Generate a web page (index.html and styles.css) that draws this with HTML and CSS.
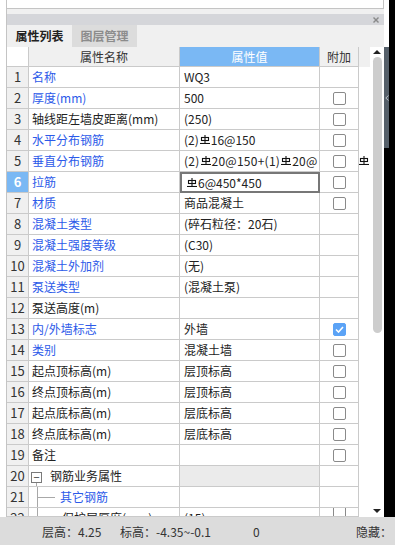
FILE: index.html
```html
<!DOCTYPE html>
<html lang="zh">
<head>
  <meta charset="UTF-8" />
  <title>属性列表</title>
  <link rel="stylesheet" href="styles.css">
</head>
<body>
  <div class="main">
    <div class="gutter"></div>
    <div class="panel">
      <div class="top-box"></div>
      <div class="spacer"></div>
      <div class="titlebar">
        <svg class="close" width="6" height="6" viewBox="0 0 6 6"><line x1="0.5" y1="0.5" x2="5.5" y2="5.5"/><line x1="5.5" y1="0.5" x2="0.5" y2="5.5"/></svg>
      </div>
      <div class="tabs">
        <div class="tab active">属性列表</div>
        <div class="tab off">图层管理</div>
      </div>

      <div class="grid-area">
        <div class="table">
          <div class="row head">
            <div class="num-head"></div>
            <div class="h-name">属性名称</div>
            <div class="h-val">属性值</div>
            <div class="h-add">附加</div>
          </div>

          <div class="row"><div class="num">1</div><div class="name blue">名称</div><div class="val">WQ3</div><div class="add"></div></div>
          <div class="row"><div class="num">2</div><div class="name blue">厚度(mm)</div><div class="val">500</div><div class="add"><span class="cb"></span></div></div>
          <div class="row"><div class="num">3</div><div class="name">轴线距左墙皮距离(mm)</div><div class="val">(250)</div><div class="add"><span class="cb"></span></div></div>
          <div class="row"><div class="num">4</div><div class="name blue">水平分布钢筋</div><div class="val">(2)<svg class="rb" width="10" height="9" viewBox="0 0 10 9"><line x1="5" y1="0" x2="5" y2="8.5"/><rect x="1.5" y="2.5" width="7" height="3"/><line x1="0" y1="8.5" x2="10" y2="8.5"/></svg>16@150</div><div class="add"><span class="cb"></span></div></div>
          <div class="row"><div class="num">5</div><div class="name blue">垂直分布钢筋</div><div class="val wide">(2)<svg class="rb" width="10" height="9" viewBox="0 0 10 9"><line x1="5" y1="0" x2="5" y2="8.5"/><rect x="1.5" y="2.5" width="7" height="3"/><line x1="0" y1="8.5" x2="10" y2="8.5"/></svg>20@150+(1)<svg class="rb" width="10" height="9" viewBox="0 0 10 9"><line x1="5" y1="0" x2="5" y2="8.5"/><rect x="1.5" y="2.5" width="7" height="3"/><line x1="0" y1="8.5" x2="10" y2="8.5"/></svg>20@</div><div class="add"><span class="cb"></span></div></div>
          <div class="row"><div class="num sel">6</div><div class="name blue">拉筋</div><div class="val editing"><svg class="rb" width="10" height="9" viewBox="0 0 10 9"><line x1="5" y1="0" x2="5" y2="8.5"/><rect x="1.5" y="2.5" width="7" height="3"/><line x1="0" y1="8.5" x2="10" y2="8.5"/></svg>6@450*450</div><div class="add"><span class="cb"></span></div></div>
          <div class="row"><div class="num">7</div><div class="name blue">材质</div><div class="val">商品混凝土</div><div class="add"><span class="cb"></span></div></div>
          <div class="row"><div class="num">8</div><div class="name blue">混凝土类型</div><div class="val">(碎石粒径：20石)</div><div class="add"></div></div>
          <div class="row"><div class="num">9</div><div class="name blue">混凝土强度等级</div><div class="val">(C30)</div><div class="add"></div></div>
          <div class="row"><div class="num">10</div><div class="name blue">混凝土外加剂</div><div class="val">(无)</div><div class="add"></div></div>
          <div class="row"><div class="num">11</div><div class="name blue">泵送类型</div><div class="val">(混凝土泵)</div><div class="add"></div></div>
          <div class="row"><div class="num">12</div><div class="name">泵送高度(m)</div><div class="val"></div><div class="add"></div></div>
          <div class="row"><div class="num">13</div><div class="name blue">内/外墙标志</div><div class="val">外墙</div><div class="add"><span class="cb on"><svg width="9" height="7" viewBox="0 0 9 7"><polyline points="1,3.5 3.5,6 8,1"/></svg></span></div></div>
          <div class="row"><div class="num">14</div><div class="name blue">类别</div><div class="val">混凝土墙</div><div class="add"><span class="cb"></span></div></div>
          <div class="row"><div class="num">15</div><div class="name">起点顶标高(m)</div><div class="val">层顶标高</div><div class="add"><span class="cb"></span></div></div>
          <div class="row"><div class="num">16</div><div class="name">终点顶标高(m)</div><div class="val">层顶标高</div><div class="add"><span class="cb"></span></div></div>
          <div class="row"><div class="num">17</div><div class="name">起点底标高(m)</div><div class="val">层底标高</div><div class="add"><span class="cb"></span></div></div>
          <div class="row"><div class="num">18</div><div class="name">终点底标高(m)</div><div class="val">层底标高</div><div class="add"><span class="cb"></span></div></div>
          <div class="row"><div class="num">19</div><div class="name">备注</div><div class="val"></div><div class="add"><span class="cb"></span></div></div>
          <div class="row">
            <div class="num">20</div>
            <div class="name tree">
              <div class="fold"><span class="fold-box">−</span><span class="fold-line"></span></div>
              <span class="group-label">钢筋业务属性</span>
            </div>
            <div class="val group"></div>
            <div class="add"></div>
          </div>
          <div class="row">
            <div class="num">21</div>
            <div class="name tree"><div class="twig"><span class="branch"></span></div><span class="leaf blue">其它钢筋</span></div>
            <div class="val"></div>
            <div class="add"></div>
          </div>
          <div class="row last">
            <div class="num">22</div>
            <div class="name tree"><div class="twig"></div><span class="leaf deep">保护层厚度(mm)</span></div>
            <div class="val">(15)</div>
            <div class="add"><span class="cb"></span></div>
          </div>
        </div>

        <div class="spill">
          <div class="spill-head"></div>
          <div class="spill-gap"></div>
          <div class="spill-row"><svg class="rb" width="10" height="9" viewBox="0 0 10 9"><line x1="5" y1="0" x2="5" y2="8.5"/><rect x="1.5" y="2.5" width="7" height="3"/><line x1="0" y1="8.5" x2="10" y2="8.5"/></svg></div>
        </div>

        <div class="scrollbar">
          <span class="arrow-up"></span>
          <span class="thumb"></span>
          <span class="fill"></span>
          <span class="arrow-down"></span>
        </div>
      </div>
    </div>

    <div class="side">
      <div class="side-a">
        <div class="side-top"></div>
        <div class="side-tab">
          <svg width="4" height="6" viewBox="0 0 4 6"><polyline points="3.5,0.5 0.8,3 3.5,5.5"/></svg>
        </div>
      </div>
    </div>
  </div>

  <div class="status">
    <span class="s1">层高：4.25</span>
    <span class="s2">标高：-4.35~-0.1</span>
    <span class="s3">0</span>
    <span class="s4">隐藏：</span>
  </div>
</body>
</html>
```

FILE: styles.css
```css
* {
  margin: 0;
  padding: 0;
  box-sizing: border-box;
}

body {
  width: 395px;
  height: 545px;
  overflow: hidden;
  background: #fff;
  font-family: "Noto Sans CJK SC", "Noto Sans", sans-serif;
  font-size: 12px;
  color: #222;
}

.main {
  display: flex;
  height: 517px;
}

.gutter {
  width: 6px;
  background: #fff;
}

.panel {
  width: 378px;
  border-left: 1px solid #c4c4c4;
  display: flex;
  flex-direction: column;
}

.top-box {
  height: 9px;
  background: #fff;
  border-right: 1px solid #c4c4c4;
  border-bottom: 1px solid #c4c4c4;
}

.spacer {
  height: 5px;
  background: #f0f0f0;
}

.titlebar {
  height: 11px;
  background: #d5d6da;
  display: flex;
  justify-content: flex-end;
  align-items: center;
  padding-right: 5px;
}

.close line {
  stroke: #8a8a8a;
  stroke-width: 1.4;
}

.tabs {
  height: 22px;
  background: #f0f0f0;
  display: flex;
}

.tab {
  width: 65px;
  text-align: center;
  line-height: 22px;
  font-weight: bold;
}

.tab.active {
  color: #222;
}

.tab.off {
  background: #dcdcdc;
  color: #8c8c8c;
}

/* property grid */
.grid-area {
  flex: 1;
  display: flex;
  overflow: hidden;
  background: #fff;
}

.table {
  width: 352px;
  flex-shrink: 0;
}

.row {
  display: grid;
  grid-template-columns: 22px 151px 140px 39px;
  height: 21px;
}

.row > div {
  border-right: 1px solid #cacaca;
  border-bottom: 1px solid #cacaca;
  line-height: 20px;
  white-space: nowrap;
  overflow: hidden;
}

.row.last {
  height: 9px;
  overflow: hidden;
}

.row.head {
  height: 20px;
}

.row.head > div {
  line-height: 19px;
  text-align: center;
  color: #333;
}

.num-head {
  background: #fff;
}

.h-name,
.h-add {
  background: #f0f0f0;
}

.h-val {
  background: #7ab8f4;
  color: #fff !important;
}

.num {
  background: #f0f0f0;
  text-align: center;
  font-size: 13px;
  color: #333;
}

.num.sel {
  background: #7ab8f4;
  color: #fff;
  font-weight: bold;
}

.name {
  padding-left: 3px;
}

.blue {
  color: #2c5ae9;
}

.val {
  padding-left: 4px;
}

.val.wide {
  letter-spacing: 0.25px;
}

.val.editing {
  border: 2px solid #777 !important;
  padding-left: 4px;
  line-height: 17px !important;
}

.val.group {
  background: #ebebeb;
}

.rb {
  vertical-align: 1px;
  margin: 0 1px;
}

.rb line,
.rb rect {
  stroke: #111;
  stroke-width: 1.1;
  fill: none;
}

.add {
  display: flex;
  align-items: center;
  justify-content: center;
}

.cb {
  width: 13px;
  height: 13px;
  border: 1px solid #8a8a8a;
  border-radius: 2px;
  background: #fff;
  display: flex;
  align-items: center;
  justify-content: center;
}

.cb.on {
  background: #5ba3f6;
  border-color: #5ba3f6;
}

.cb.on polyline {
  fill: none;
  stroke: #fff;
  stroke-width: 1.6;
}

/* tree rows */
.name.tree {
  display: flex;
  padding-left: 2px;
}

.fold {
  width: 11px;
  display: flex;
  flex-direction: column;
  padding-top: 6px;
}

.fold-box {
  width: 11px;
  height: 11px;
  border: 1px solid #7a7a7a;
  background: #fff;
  font-size: 11px;
  line-height: 8px;
  text-align: center;
  color: #333;
}

.fold-line {
  flex: 1;
  width: 1px;
  margin-left: 5px;
  background: #a8a8a8;
}

.group-label {
  margin-left: 8px;
}

.twig {
  width: 18px;
  margin-left: 6px;
  border-left: 1px solid #a8a8a8;
  flex-shrink: 0;
}

.branch {
  display: block;
  height: 1px;
  margin-top: 10px;
  background: #a8a8a8;
}

.leaf {
  padding-left: 5px;
}

.leaf.deep {
  padding-left: 7px;
}

/* overflow column beside the grid */
.spill {
  width: 11px;
}

.spill-head {
  height: 20px;
  background: #f0f0f0;
}

.spill-gap {
  height: 84px;
}

.spill-row {
  height: 21px;
  line-height: 20px;
}

.spill-row .rb {
  margin: 0;
}

.scrollbar {
  width: 14px;
  display: flex;
  flex-direction: column;
  align-items: center;
  background: #fff;
}

.arrow-up {
  margin-top: 3px;
  border-left: 4px solid transparent;
  border-right: 4px solid transparent;
  border-bottom: 4px solid #222;
}

.thumb {
  margin-top: 3px;
  width: 9px;
  height: 276px;
  border-radius: 5px;
  background: #cdcdcd;
}

.fill {
  flex: 1;
}

.arrow-down {
  margin-bottom: 4px;
  border-left: 4px solid transparent;
  border-right: 4px solid transparent;
  border-top: 4px solid #222;
}

/* collapsed side dock */
.side {
  width: 11px;
  background: #000;
  display: flex;
}

.side-a {
  width: 5px;
  display: flex;
  flex-direction: column;
}

.side-top {
  height: 47px;
  background: #fff;
}

.side-tab {
  height: 101px;
  background: #56606a;
  display: flex;
  align-items: center;
  justify-content: center;
}

.side-tab polyline {
  fill: none;
  stroke: #b8bec4;
  stroke-width: 1;
}

/* status bar */
.status {
  height: 28px;
  background: #dcdcdc;
  display: flex;
  align-items: center;
  padding-left: 42px;
  color: #333;
  font-size: 12px;
}

.s1 {
  width: 78px;
}

.s2 {
  width: 133px;
}

.s3 {
  flex: 1;
}

.s4 {
  padding-right: 3px;
}
```
